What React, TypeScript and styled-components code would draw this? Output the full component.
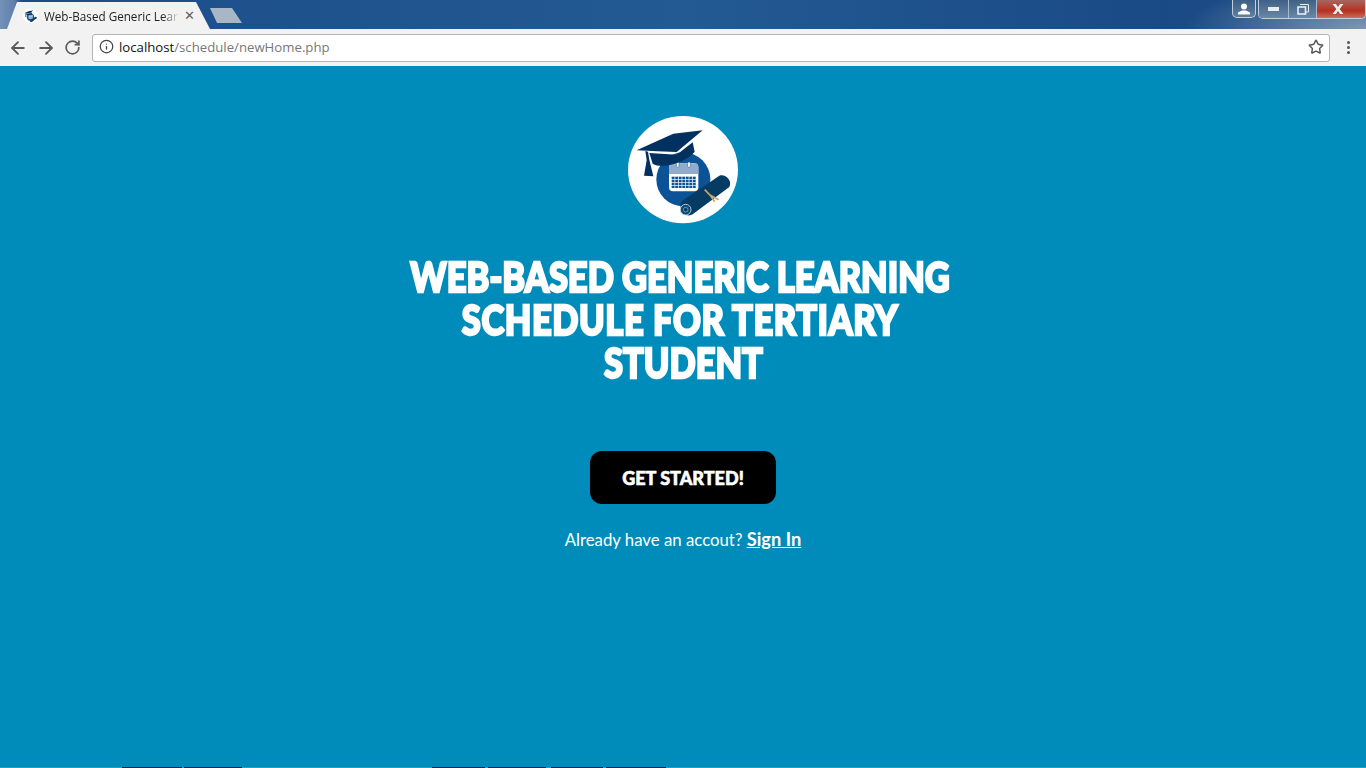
import React from "react";
import styled, { createGlobalStyle } from "styled-components";
import { ArrowLeft, ArrowRight, RotateCw, Info, Star } from "lucide-react";

const GlobalStyle = createGlobalStyle`
  html, body {
    margin: 0;
    height: 100%;
    overflow: hidden;
  }
  #root {
    height: 100%;
  }
`;

const Logo = ({ size }: { size: number }) => {
  const cells = [];
  for (let row = 0; row < 4; row++) {
    for (let col = 0; col < 7; col++) {
      cells.push(<rect key={`${row}-${col}`} x={155 + col * 10.6} y={197 + row * 9} width={8.6} height={7} fill="#0d5597" />);
    }
  }
  return (
    <svg width={size} height={size * (118 / 126)} viewBox="0 0 378 354">
      <ellipse cx="189" cy="176" rx="165" ry="161" fill="#fff" />
      <circle cx="190" cy="205" r="81" fill="#0b5296" />
      <rect x="147" y="157" width="88" height="84" rx="12" fill="#fff" />
      <path d="M147 169a12 12 0 0 1 12-12h64a12 12 0 0 1 12 12v20h-88z" fill="#8facca" />
      <rect x="169" y="153" width="8" height="16" rx="3.5" fill="#fff" stroke="#0b5296" strokeWidth="1.5" />
      <rect x="203" y="153" width="8" height="16" rx="3.5" fill="#fff" stroke="#0b5296" strokeWidth="1.5" />
      {cells}
      <path d="M50 118 L160 68 L248 58 L170 123 L112 121 Z" fill="#02305f" />
      <path d="M88 126 L170 131 L218 94 L224 122 C198 154 128 176 98 158 Z" fill="#02305f" />
      <path d="M76 120 L84 122 L88 146 L100 196 L72 194 L80 148 Z" fill="#02305f" />
      <path d="M186 270 L298 194 C316 188 338 208 328 228 L218 310 C200 322 170 300 186 270 Z" fill="#063c63" />
      <circle cx="197" cy="296" r="16" fill="#0a4a78" stroke="#d4dfe6" strokeWidth="2.5" />
      <circle cx="197" cy="296" r="7" fill="#063c63" stroke="#d4dfe6" strokeWidth="1.5" />
      <path d="M254 236 L270 252 L296 266 M270 252 L284 272" stroke="#c6a76b" strokeWidth="5" fill="none" />
    </svg>
  );
};

const stripSegments = [
  { w: 122, dark: false }, { w: 60, dark: true }, { w: 2, dark: false }, { w: 58, dark: true },
  { w: 190, dark: false }, { w: 53, dark: true }, { w: 3, dark: false }, { w: 58, dark: true },
  { w: 5, dark: false }, { w: 52, dark: true }, { w: 3, dark: false }, { w: 60, dark: true },
  { w: 700, dark: false },
];

export default function App() {
  return (
    <Shell>
      <GlobalStyle />
      <TabBar>
        <TabGroup>
          <Tab>
            <Logo size={17} />
            <TabTitle>Web-Based Generic Learning Schedule</TabTitle>
            <TabClose>✕</TabClose>
          </Tab>
          <NewTab />
        </TabGroup>
        <WindowControls>
          <UserButton>
            <svg width="14" height="12" viewBox="0 0 14 12">
              <circle cx="7" cy="3.5" r="3" fill="#fff" />
              <path d="M1 11.5V9.5L5 7.5H9L13 9.5V11.5Z" fill="#fff" />
            </svg>
          </UserButton>
          <ControlGroup>
            <ControlButton $width={29}>
              <svg width="11" height="4"><rect width="11" height="4" fill="#e8edf2" /></svg>
            </ControlButton>
            <ControlButton $width={27}>
              <svg width="12" height="11" viewBox="0 0 12 11">
                <path d="M3 .5h8.5v7.5H9" fill="none" stroke="#e8edf2" />
                <rect x="1" y="3" width="7.5" height="7" fill="none" stroke="#e8edf2" strokeWidth="1.6" />
              </svg>
            </ControlButton>
            <CloseButton>
              <svg width="14" height="10" viewBox="0 0 15 12">
                <path d="M1 0H5L7.5 3.5L10 0H14L9.5 6L14 12H10L7.5 8.5L5 12H1L5.5 6Z" fill="#eceff2" />
              </svg>
            </CloseButton>
          </ControlGroup>
        </WindowControls>
      </TabBar>
      <Toolbar>
        <NavIcons>
          <ArrowLeft size={20} strokeWidth={2.2} />
          <ArrowRight size={20} strokeWidth={2.2} />
          <RotateCw size={17} strokeWidth={2.4} />
        </NavIcons>
        <Omnibox>
          <Info size={15} strokeWidth={2} color="#444" />
          <Url>
            localhost<UrlRest>/schedule/newHome.php</UrlRest>
          </Url>
          <Star size={16} strokeWidth={2.2} color="#555" />
        </Omnibox>
        <MenuDots>
          <i />
          <i />
          <i />
        </MenuDots>
      </Toolbar>
      <Page>
        <Logo size={126} />
        <Heading>
          <HeadingLine $spacing={0}>WEB-BASED GENERIC LEARNING</HeadingLine>
          <HeadingLine $spacing={0.7}>SCHEDULE FOR TERTIARY</HeadingLine>
          <HeadingLine $spacing={0} $shift={8}>STUDENT</HeadingLine>
        </Heading>
        <StartButton>GET STARTED!</StartButton>
        <SignInLine>
          Already have an accout? <SignInLink href="#">Sign In</SignInLink>
        </SignInLine>
      </Page>
      <Strip>
        {stripSegments.map((s, i) => (
          <StripSegment key={i} $dark={s.dark} style={{ width: s.w }} />
        ))}
      </Strip>
    </Shell>
  );
}

const Shell = styled.div`
  height: 100%;
  display: flex;
  flex-direction: column;
  background: #008cba;
`;

const TabBar = styled.div`
  height: 29px;
  flex: none;
  display: flex;
  justify-content: space-between;
  background:
    linear-gradient(90deg, #7591b9 0, #5f80ad 14px, transparent 22px),
    radial-gradient(ellipse 180px 50px at 100% 100%, #7f97b2 0, rgba(127, 151, 178, 0) 100%),
    linear-gradient(90deg, #1b4c89 0, #235a93 50%, #1a4a85 85%, #1f4e85 100%);
`;

const TabGroup = styled.div`
  display: flex;
  align-items: flex-end;
  padding-left: 7px;
`;

const Tab = styled.div`
  width: 203px;
  height: 27px;
  box-sizing: border-box;
  padding: 0 15px 0 15px;
  display: flex;
  align-items: center;
  gap: 5px;
  background: #f2f2f2;
  clip-path: polygon(0 100%, 10px 0, 189px 0, 203px 100%);
  svg {
    flex: none;
  }
`;

const TabTitle = styled.span`
  flex: 1;
  overflow: hidden;
  white-space: nowrap;
  font: 11.7px "Open Sans", sans-serif;
  color: #222;
  -webkit-mask-image: linear-gradient(90deg, #000 88%, transparent 100%);
  mask-image: linear-gradient(90deg, #000 88%, transparent 100%);
`;

const TabClose = styled.span`
  font: bold 13px "DejaVu Sans", sans-serif;
  color: #5f5f5f;
`;

const NewTab = styled.div`
  width: 32px;
  height: 15px;
  margin: 0 0 6px 0;
  background: #a9b6c6;
  clip-path: polygon(0 0, 22px 0, 32px 100%, 7px 100%);
`;

const WindowControls = styled.div`
  display: flex;
  align-items: flex-start;
  gap: 2px;
`;

const UserButton = styled.div`
  width: 24px;
  height: 18px;
  box-sizing: border-box;
  display: flex;
  align-items: center;
  justify-content: center;
  border: 1px solid #c3d0dd;
  border-top: 0;
  border-radius: 0 0 5px 5px;
  background: linear-gradient(#3d5f85, #5f7f9f);
`;

const ControlGroup = styled.div`
  display: flex;
  height: 18px;
  border: 1px solid #c3d0dd;
  border-top: 0;
  border-radius: 0 0 5px 5px;
  overflow: hidden;
`;

const ControlButton = styled.div<{ $width: number }>`
  width: ${(p) => p.$width}px;
  display: flex;
  align-items: center;
  justify-content: center;
  border-right: 1px solid #a9bacb;
  background: linear-gradient(#3f6088, #6a88a6);
`;

const CloseButton = styled.div`
  width: 48px;
  box-sizing: border-box;
  padding-right: 6px;
  display: flex;
  align-items: center;
  justify-content: center;
  background: linear-gradient(#a5675f, #b8301f 60%, #c7705f);
`;

const Toolbar = styled.div`
  height: 37px;
  flex: none;
  box-sizing: border-box;
  display: flex;
  align-items: center;
  padding: 0 6px 0 8px;
  background: #f2f2f2;
`;

const NavIcons = styled.div`
  width: 84px;
  display: flex;
  align-items: center;
  gap: 8px;
  color: #5a5a5a;
`;

const Omnibox = styled.div`
  flex: 1;
  height: 28px;
  box-sizing: border-box;
  display: flex;
  align-items: center;
  gap: 5px;
  padding: 0 5px 2px 6px;
  background: #fff;
  border: 1px solid #b4b4b4;
  border-radius: 3px;
`;

const Url = styled.div`
  flex: 1;
  font: 13.2px "Open Sans", sans-serif;
  color: #111;
`;

const UrlRest = styled.span`
  color: #777;
`;

const MenuDots = styled.div`
  width: 30px;
  box-sizing: border-box;
  padding-right: 10px;
  display: flex;
  flex-direction: column;
  align-items: flex-end;
  gap: 2px;
  i {
    width: 3px;
    height: 3px;
    border-radius: 50%;
    background: #555;
  }
`;

const Page = styled.main`
  flex: 1;
  display: flex;
  flex-direction: column;
  align-items: center;
  padding-top: 45px;
  background: #008cba;
  color: #fff;
`;

const Heading = styled.h1`
  margin: 26px 6px 0 0;
  font: 900 41px/43px Lato, sans-serif;
  -webkit-text-stroke: 2.4px #fff;
  text-align: center;
  white-space: nowrap;
  transform: scaleX(0.84);
`;

const HeadingLine = styled.div<{ $spacing: number; $shift?: number }>`
  letter-spacing: ${(p) => p.$spacing}px;
  padding-left: ${(p) => p.$shift ?? 0}px;
`;

const StartButton = styled.button`
  width: 186px;
  height: 53px;
  margin-top: 67px;
  border: 0;
  border-radius: 12px;
  background: #000;
  color: #fff;
  font: 900 18px Lato, sans-serif;
  -webkit-text-stroke: 0.6px #fff;
`;

const SignInLine = styled.p`
  margin: 23px 0 0;
  font: 16.8px/24px Lato, sans-serif;
`;

const SignInLink = styled.a`
  font-size: 18.3px;
  font-weight: 700;
  color: #fff;
`;

const Strip = styled.div`
  height: 1px;
  flex: none;
  display: flex;
  overflow: hidden;
`;

const StripSegment = styled.div<{ $dark: boolean }>`
  flex: none;
  background: ${(p) => (p.$dark ? "#0a1a22" : "#5c8ba0")};
`;
